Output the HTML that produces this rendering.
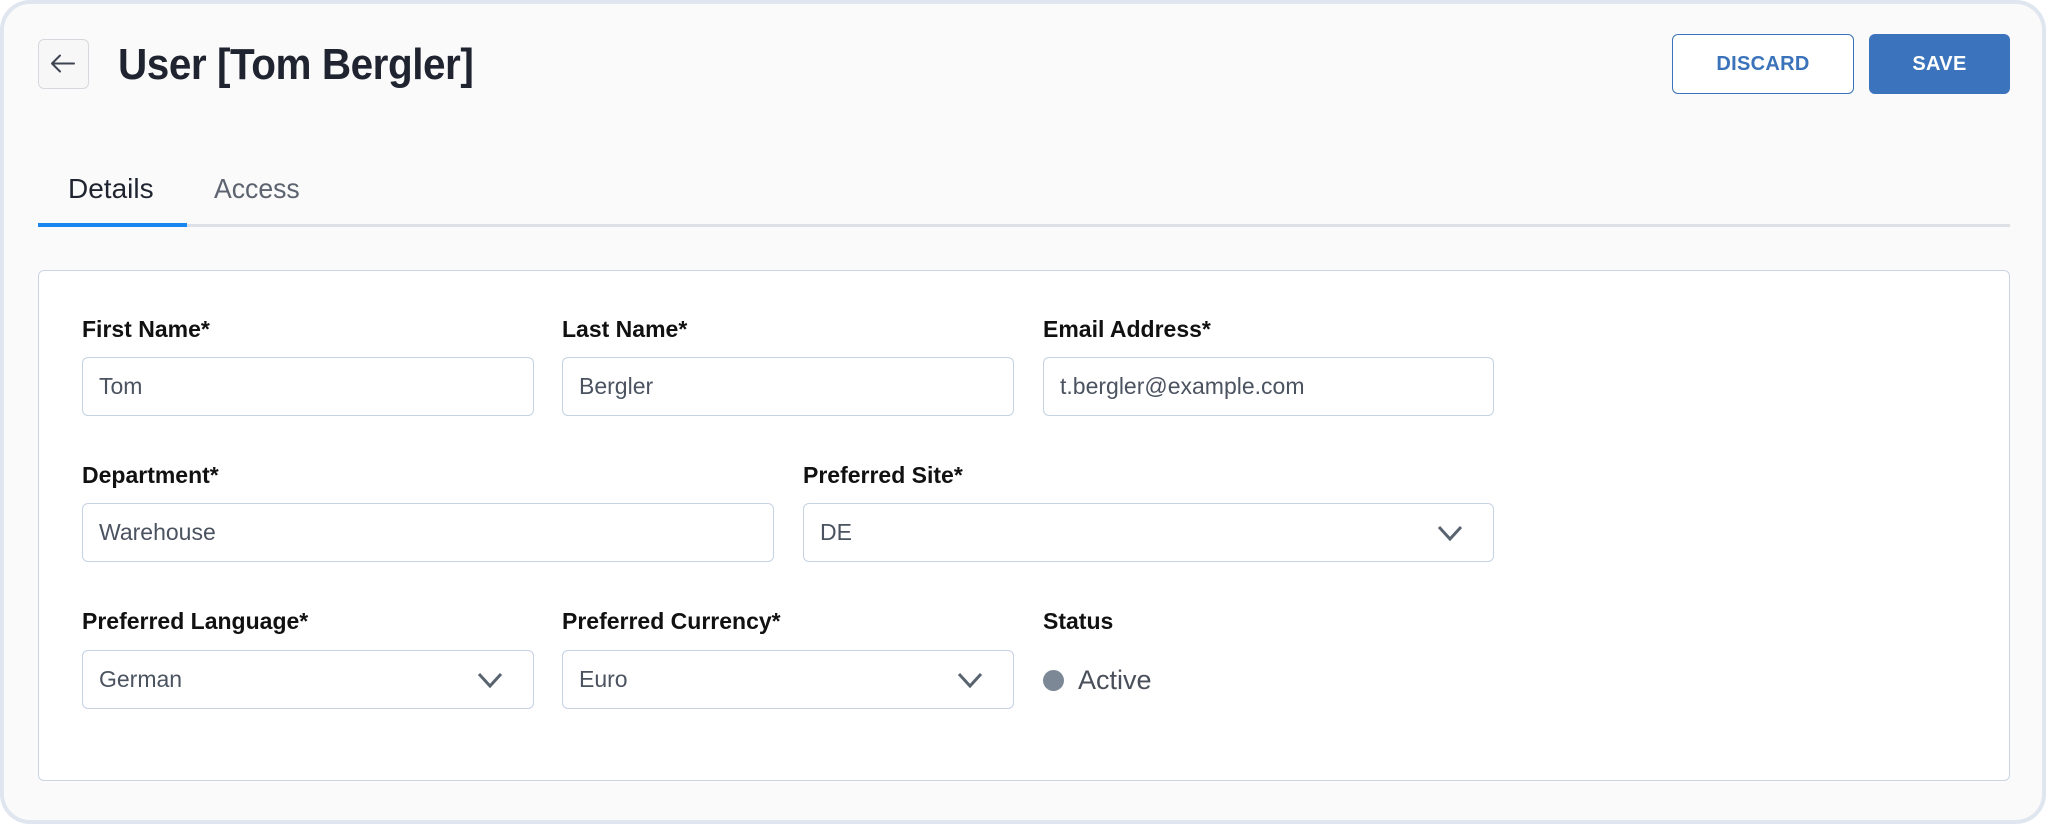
<!DOCTYPE html>
<html><head><meta charset="utf-8"><style>
*{box-sizing:border-box;margin:0;padding:0}
body{width:2046px;height:824px;background:#fff;font-family:"Liberation Sans",sans-serif;position:relative;overflow:hidden}
.outer{position:absolute;left:0;top:0;width:2046px;height:824px;background:#fafafa;border:4px solid #dfe6ef;border-radius:30px}
.abs{position:absolute}
.back{left:38px;top:39px;width:51px;height:50px;border:1.5px solid #d5d9de;border-radius:6px;background:#f7f7f7}
h1{position:absolute;left:118px;top:40px;font-size:44px;font-weight:bold;color:#1f2430;line-height:50px;letter-spacing:-0.5px;transform:scaleX(0.92);transform-origin:left}
.btn{position:absolute;top:34px;height:60px;border-radius:6px;font-size:20px;font-weight:bold;display:flex;align-items:center;justify-content:center;letter-spacing:0.3px}
.tab{position:absolute;top:172px;font-size:28px;line-height:34px}
.card{position:absolute;left:38px;top:270px;width:1972px;height:511px;background:#fff;border:1.5px solid #c9d5e3;border-radius:6px}
.lbl{position:absolute;font-size:23px;font-weight:bold;color:#111;line-height:28px}
.inp{position:absolute;height:59px;border:1.5px solid #c5d2e2;border-radius:6px;background:#fff;font-size:23px;color:#4b5360;padding-left:16px;line-height:56px}
.chev{position:absolute;right:30px;top:21px}
</style></head><body>
<div class="outer"></div>
<div class="abs back"><svg width="48" height="47" viewBox="0 0 48 47"><path d="M13 23.5H35M13 23.5L21 15.5M13 23.5L21 31.5" stroke="#3d4452" stroke-width="2" fill="none" stroke-linecap="round"/></svg></div>
<h1>User [Tom Bergler]</h1>
<div class="btn" style="left:1672px;width:182px;border:1.5px solid #3b73ba;color:#3b73ba;background:#fff">DISCARD</div>
<div class="btn" style="left:1869px;width:141px;background:#3b74bc;color:#fff">SAVE</div>
<div class="tab" style="left:68px;color:#1f2430">Details</div>
<div class="tab" style="left:214px;color:#5d6470;transform:scaleX(0.95);transform-origin:left">Access</div>
<div class="abs" style="left:38px;top:224px;width:1972px;height:3px;background:#dde1e6"></div>
<div class="abs" style="left:38px;top:223px;width:149px;height:4px;background:#1a86f0"></div>
<div class="card"></div>

<div class="lbl" style="left:82px;top:315px">First Name*</div>
<div class="lbl" style="left:562px;top:315px">Last Name*</div>
<div class="lbl" style="left:1043px;top:315px">Email Address*</div>
<div class="inp" style="left:82px;top:357px;width:452px">Tom</div>
<div class="inp" style="left:562px;top:357px;width:452px">Bergler</div>
<div class="inp" style="left:1043px;top:357px;width:451px">t.bergler@example.com</div>

<div class="lbl" style="left:82px;top:461px">Department*</div>
<div class="lbl" style="left:803px;top:461px">Preferred Site*</div>
<div class="inp" style="left:82px;top:503px;width:692px">Warehouse</div>
<div class="inp" style="left:803px;top:503px;width:691px">DE<svg class="chev" width="26" height="17" viewBox="0 0 26 17"><path d="M2 2L13 14L24 2" stroke="#5a6370" stroke-width="3" fill="none"/></svg></div>

<div class="lbl" style="left:82px;top:607px">Preferred Language*</div>
<div class="lbl" style="left:562px;top:607px">Preferred Currency*</div>
<div class="lbl" style="left:1043px;top:607px">Status</div>
<div class="inp" style="left:82px;top:650px;width:452px">German<svg class="chev" width="26" height="17" viewBox="0 0 26 17"><path d="M2 2L13 14L24 2" stroke="#5a6370" stroke-width="3" fill="none"/></svg></div>
<div class="inp" style="left:562px;top:650px;width:452px">Euro<svg class="chev" width="26" height="17" viewBox="0 0 26 17"><path d="M2 2L13 14L24 2" stroke="#5a6370" stroke-width="3" fill="none"/></svg></div>
<div class="abs" style="left:1043px;top:670px;width:21px;height:21px;border-radius:50%;background:#7c8896"></div>
<div class="abs" style="left:1078px;top:663px;font-size:27px;color:#4a505b;line-height:34px">Active</div>
</body></html>
